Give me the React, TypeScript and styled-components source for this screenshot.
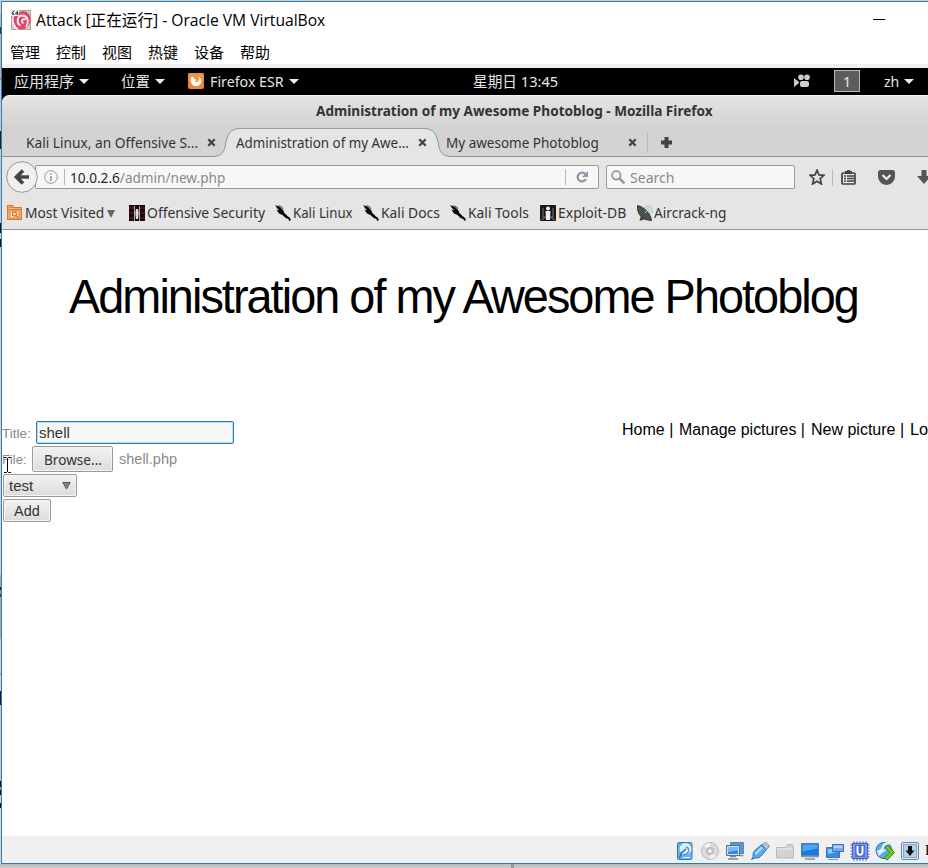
import React, { useLayoutEffect, useRef, useState } from "react";
import styled, { createGlobalStyle, css } from "styled-components";

const ui = `"Noto Sans", "Noto Sans CJK SC", sans-serif`;
const page = `"Liberation Sans", Arial, sans-serif`;

const Global = createGlobalStyle`
  * { box-sizing: border-box; }
  html, body { margin: 0; padding: 0; overflow: hidden; background: #cfcfcf; }
  svg { display: block; flex: none; }
`;

/* Text that is condensed or widened to occupy a given width. */
const FitBox = styled.span<{ $w: number; $gap: number; $up: number }>`
  display: block;
  flex: none;
  width: ${(p) => p.$w}px;
  margin-left: ${(p) => p.$gap}px;
  margin-top: ${(p) => -p.$up}px;
  white-space: nowrap;
`;
const FitInner = styled.span`
  display: inline-block;
  transform-origin: 0 50%;
`;
type FitProps = { w: number; gap?: number; up?: number; children: React.ReactNode };
function Fit({ w, gap = 0, up = 0, children }: FitProps) {
  const ref = useRef<HTMLSpanElement>(null);
  const [scale, setScale] = useState(1);
  useLayoutEffect(() => {
    if (ref.current) setScale(w / ref.current.offsetWidth);
  }, [w]);
  return (
    <FitBox $w={w} $gap={gap} $up={up}>
      <FitInner ref={ref} style={{ transform: `scaleX(${scale})` }}>{children}</FitInner>
    </FitBox>
  );
}

const Desktop = styled.div`
  width: 928px;
  height: 868px;
  display: grid;
  grid-template-columns: 1px 1fr;
  grid-template-rows: 1px 863px 4px;
  overflow: hidden;
  background: #cfcfcf;
`;
const Edge = styled.div`
  grid-row: 2;
  background: linear-gradient(#d0d0d0 0 13px, #b5b5bc 13px 26px, #333 26px 33px, #b5b5bc 33px 77px,
    #888 77px 79px, #cacad0 79px 130px, #222 130px 148px, #cacad0 148px 222px, #111 222px 232px,
    #ccc 232px 238px, #111 238px 246px, #d2d2d6 246px 574px, #aaa 574px 586px, #222 586px 589px,
    #999 589px 593px, #444 593px 596px, #aaa 596px 638px, #d2d2d6 638px 672px, #aaa 672px 674px,
    #d2d2d6 674px 690px, #1c1c28 690px 704px, #c8c8cc 704px 780px, #111 780px 786px,
    #999 786px 789px, #111 789px 794px, #ccc 794px 802px, #111 802px 807px, #d5d5d5 807px);
`;
const Shadow = styled.div`
  grid-column: 1 / 3;
  grid-row: 3;
  background: linear-gradient(90deg, transparent 511px, #999 511px 514px, transparent 514px),
    linear-gradient(#b9b9b9, #cecece);
`;
const Window = styled.div`
  grid-row: 2;
  grid-column: 2;
  border: 1px solid #2b7cb9;
  border-right: 0;
  display: flex;
  flex-direction: column;
  background: #fff;
  overflow: hidden;
`;

const row = css`
  display: flex;
  align-items: center;
  flex: none;
  overflow: hidden;
`;
const TitleBar = styled.div`
  ${row}
  height: 37px;
  padding: 0 0 2px 9px;
  font: 16px/24px "Open Sans", "Noto Sans CJK SC", sans-serif;
  color: #000;
`;
const Minimize = styled.span`
  width: 12px;
  height: 1px;
  margin-left: 548px;
  background: #000;
`;
const MenuBar = styled.div`
  ${row}
  padding: 2px 0 1px 8px;
  border-bottom: 4px solid #f0f0f0;
  font: 15px/22px "Noto Sans CJK SC", sans-serif;
  box-sizing: content-box;
  height: 22px;
  color: #000;
`;
const GnomeBar = styled.div`
  ${row}
  height: 27px;
  padding: 0 0 2px 12px;
  background: #000;
  color: #e6e6e6;
  font: 15px/22px ${ui};
`;
const Caret = styled.span`
  margin-left: 5px;
  margin-top: 1px;
  border: 5px solid transparent;
  border-top-color: #eee;
  border-bottom: 0;
  flex: none;
`;
const Workspace = styled.span`
  width: 26px;
  height: 22px;
  margin-left: 24px;
  border: 1px solid #bbb;
  background: #5c5c5c;
  text-align: center;
  font-size: 15px;
  line-height: 20px;
  flex: none;
`;
const Chrome = styled.div`
  flex: none;
  background: #000;
`;
const BrowserHead = styled.div`
  height: 62px;
  border-radius: 7px 0 0 0;
  border-top: 1px solid #f4f4f4;
  background: linear-gradient(#e4e4e4, #d2d2d2 32px, #d4d4d4);
  color: #333;
`;
const BrowserTitle = styled.div`
  ${row}
  height: 32px;
  padding-bottom: 2px;
  font: bold 14px/22px ${ui};
`;
const TabStrip = styled.div`
  ${row}
  height: 29px;
  padding-bottom: 1px;
  font: 15px/22px ${ui};
  background: linear-gradient(#8f9397, #8f9397) 0 28px / 100% 1px no-repeat;
`;
const ActiveTab = styled.div`
  display: flex;
  align-items: center;
  position: relative;
  height: 28px;
  width: 210px;
  margin-left: 20px;
`;
const TabBack = styled.div`
  position: absolute;
  inset: 0 auto auto -24px;
  display: grid;
  grid-template-columns: 28px 184px 28px;
  height: 29px;
  & ~ * { position: relative; }
`;
const TabMiddle = styled.div`
  background: #e5e5e5;
  border-top: 1px solid #969ca2;
`;
const Rule = styled.span<{ $gap: number; $h: number }>`
  width: 1px;
  height: ${(p) => p.$h}px;
  margin-left: ${(p) => p.$gap}px;
  background: #b8b8b8;
  flex: none;
`;
const NavBar = styled.div`
  ${row}
  height: 40px;
  padding-left: 4px;
  background: #e5e5e5;
  color: #8a8a8a;
  font: 15px/22px ${ui};
`;
const Back = styled.span`
  z-index: 1;
  flex: none;
`;
const Field = styled.div<{ $w: number; $gap: number; $pad: number }>`
  display: flex;
  align-items: center;
  flex: none;
  height: 24px;
  width: ${(p) => p.$w}px;
  margin-left: ${(p) => p.$gap}px;
  padding-left: ${(p) => p.$pad}px;
  border: 1px solid #999;
  border-radius: 2px;
  background: #f7f7f7;
`;
const Host = styled.b`
  font-weight: 400;
  color: #262626;
`;
const Bookmarks = styled.div`
  ${row}
  height: 33px;
  padding: 0 0 1px 5px;
  background: #e5e5e5;
  border-bottom: 1px solid #999;
  font: 15px/22px ${ui};
  color: #333;
`;
const Folded = styled.span`
  margin-left: 3px;
  margin-top: 2px;
  border: 4px solid transparent;
  border-top: 8px solid #666;
  border-bottom: 0;
  flex: none;
`;
const Page = styled.main`
  position: relative;
  flex: 1;
  background: #fff;
  font-family: ${page};
`;
const Heading = styled.h1`
  margin: 0;
  padding: 37px 0 0 67px;
  height: 190px;
  font: 48px/60px ${page};
  letter-spacing: -2px;
  color: #000;
`;
const Columns = styled.div`
  display: flex;
`;
const Form = styled.form`
  width: 620px;
  flex: none;
  display: flex;
  flex-direction: column;
  color: #888;
  font: 13px/20px ${page};
`;
const FormRow = styled.div<{ $h: number; $indent?: number }>`
  display: flex;
  align-items: center;
  height: ${(p) => p.$h}px;
  padding-left: ${(p) => p.$indent ?? 0}px;
  flex: none;
`;
const TextInput = styled.div`
  width: 198px;
  height: 23px;
  margin-left: 5px;
  padding-left: 2px;
  border: 1px solid #2a7fb0;
  border-radius: 2px;
  box-shadow: inset 0 0 0 1px #b5def5;
  background: #f7f7f7;
  color: #333;
  font: 15px/22px ${page};
`;
const Button = styled.div<{ $w: number; $h: number; $gap?: number; $ui?: boolean }>`
  display: flex;
  align-items: center;
  justify-content: center;
  flex: none;
  width: ${(p) => p.$w}px;
  height: ${(p) => p.$h}px;
  margin-left: ${(p) => p.$gap ?? 0}px;
  border: 1px solid #999;
  border-radius: 2px;
  background: linear-gradient(#f2f2f2, #dcdcdc);
  box-shadow: inset 0 0 0 1px #f4f4f4;
  color: #333;
  font: 15px/20px ${(p) => (p.$ui ? ui : page)};
`;
const Chosen = styled.span`
  font: 15px/20px ${page};
`;
const Links = styled.nav`
  display: flex;
  padding-top: 1px;
  font: 16px/18px ${page};
  color: #000;
`;
const Pointer = styled.span`
  position: absolute;
  left: 1px;
  top: 226px;
`;
const Status = styled.div`
  ${row}
  height: 27px;
  padding: 3px 0 0 673px;
  gap: 5px;
  background: #f0f0f0;
  font: 14px/20px "Liberation Serif", serif;
  color: #000;
  white-space: nowrap;
`;

const SpacedSvg = styled.svg<{ $gap?: number }>`
  margin-left: ${(p) => p.$gap ?? 0}px;
`;
const Icon = SpacedSvg;
const X = ({ gap }: { gap: number }) => (
  <SpacedSvg $gap={gap} width="9" height="9" viewBox="0 0 9 9">
    <path d="M1.3 1.3 7.7 7.7M7.7 1.3 1.3 7.7" stroke="#444" strokeWidth="2.3" />
  </SpacedSvg>
);

const Debian = () => (
  <svg width="20" height="20" viewBox="0 0 20 20">
    <rect x=".5" y=".5" width="19" height="19" fill="#d9d4cb" stroke="#aaa397" />
    <path d="M10 1.500C16 .5 19.500 4 19.500 9.500 19.500 15 16 19.500 9 19.500 4.500 18.500 1.500 14 2.500 9 3 6 6 3 10 1.500Z" fill="#e0436b" />
    <path d="M1.500 9Q2 16 7 19.500M15 17C18.500 11 16.500 5.500 11 5.500 5.500 6 5.500 14 9.500 15.500M15 9.500Q13 8.500 11.500 9.800 10 12 12.500 13.500" fill="none" stroke="#fbe6ea" strokeWidth="1.900" />
    <path d="M0 0h8v6H0z" fill="#e8e8e8" />
    <path d="M3.2 1.2Q1.2 1.2 1.2 3.6 1.5 5 2.7 4.6 3.7 3.4 1.6 3.1M6.5 5V1.3L4.5 3.8h2.8" fill="none" stroke="#333" strokeWidth=".9" />
  </svg>
);
const Fox = () => (
  <Icon $gap={23} width="16" height="16" viewBox="0 0 16 16">
    <rect width="16" height="16" rx="2" fill="#ef8535" />
    <path d="M0 0h16v8H0z" fill="#fbaa60" opacity=".4" />
    <path d="M3.200 4C1.800 8.500 3.500 13.200 8 13.200c4.300 0 6.300-3.700 4.800-7.200-.5-1.300-1.500-2.200-2.800-2.600C11.200 4.800 11.500 6 10.800 7.500 9.800 9.300 7.200 9.300 6.400 8c1.400.2 2-.6 1.500-1.600C6.200 6.300 5 5.400 5 3.600Z" fill="#fff" />
  </Icon>
);
const Kali = ({ gap }: { gap: number }) => (
  <Icon $gap={gap} width="16" height="16" viewBox="0 0 16 16">
    <path d="M0 0 5 2 8.500 5.500 9 7.500 12.500 11 15 13 16 15 14 16 13.500 14 10.500 13 7.500 10 4 8.500 1.500 4.800 4 5.500Z" fill="#050505" />
    <path d="M3 .8 7 2 8 4M1.500 2.500 5 4" fill="none" stroke="#111" strokeWidth=".7" />
  </Icon>
);

const StatusIcons = () => (
  <>
    <svg width="20" height="20" viewBox="0 0 20 20">
      <rect x="2.500" y="1.500" width="14.500" height="17" rx="1.500" fill="#69b4ef" stroke="#2f79b9" />
      <circle cx="10.500" cy="8" r="5.300" fill="#d9effd" stroke="#fff" />
      <path d="m4.500 17 2-5 4.500-4" fill="none" stroke="#2676b8" strokeWidth="1.600" />
      <path d="M8 13.500c6 1 7.500-6 3-7.500" fill="none" stroke="#4f98d2" strokeWidth="1.400" /><path d="M8 16.500h7" stroke="#e8f7ff" />
    </svg>
    <svg width="20" height="20" viewBox="0 0 20 20">
      <circle cx="10" cy="10" r="8.500" fill="#dcdcdc" stroke="#b9b9b9" />
      <path d="M10 10 4 4.500Q7 1.700 10 2ZM10 10l6 5.500Q13 18 10 18Z" fill="#f2f2f2" />
      <circle cx="10" cy="10" r="3.500" fill="#cfcfcf" stroke="#aaa" /><circle cx="10" cy="10" r="1.500" fill="#fff" />
    </svg>
    <svg width="20" height="20" viewBox="0 0 20 20">
      <path d="M5.500 1.500h13v11h-13z" fill="#4a9bf0" stroke="#6c8296" />
      <path d="M14 14.500h4.500" stroke="#8b949c" strokeWidth="1.500" />
      <path d="M1.500 4.500h13v10h-13z" fill="#2989ee" stroke="#5d7184" />
      <path d="M2.500 5.500h11v8h-11z" fill="none" stroke="#cfe2f3" /><path d="M3 6h10v3.500L3 11z" fill="#77baf8" />
      <path d="M5 15.500h6M3 18h10" stroke="#7d878e" strokeWidth="1.500" />
    </svg>
    <svg width="20" height="20" viewBox="0 0 20 20">
      <path d="m12 4.500 3.500-3.500 4 4-3.500 4Z" fill="#d4d8dc" stroke="#7a8085" /><path d="m15 3.500 1 1M17 5.500l.8.8" stroke="#444" />
      <path d="M1.500 18.500 3.200 15.500C2.500 12 4 10 7 7.500l5-4 4.500 5-4 5Q9 18 4.800 17Z" fill="#5baae9" stroke="#2873b4" />
      <path d="M5.500 13 12 6.500" stroke="#b9e0fb" strokeWidth="2.200" />
    </svg>
    <svg width="20" height="20" viewBox="0 0 20 20">
      <path d="M1.500 6.500h9l2-3h5l1 2v11.500h-17Z" fill="#d2d2d2" stroke="#b8b8b8" /><path d="M2 8h16" stroke="#eee" />
    </svg>
    <svg width="20" height="20" viewBox="0 0 20 20">
      <path d="M1.500 2.500h17v12h-17z" fill="#167ae2" stroke="#517faa" /><path d="M2.500 3.500h15v4l-15 3z" fill="#4ba4f5" />
      <path d="M1 15.500h18M5 18h10" stroke="#87939d" strokeWidth="1.300" />
    </svg>
    <svg width="20" height="20" viewBox="0 0 20 20">
      <path d="M1.500 6.500h13v10h-13z" fill="#338ded" stroke="#4276aa" /><path d="M3 8h9v3l-9 2z" fill="#8ec8ff" />
      <path d="M7.500 3.500h11v7h-11z" fill="#76a9ee" stroke="#3570bd" /><path d="M8.500 4.500h9v2.500h-9z" fill="#b1d2fa" /><path d="M3 18.500h10" stroke="#8a959f" />
    </svg>
    <svg width="20" height="20" viewBox="0 0 20 20">
      <path d="M4 .5v19M7 .5v19M10 .5v19M13 .5v19M16 .5v19M.5 4h19M.5 7h19M.5 10h19M.5 13h19M.5 16h19" stroke="#3f58c0" strokeWidth="1.200" />
      <rect x="2.500" y="2.500" width="15" height="15" fill="#7d9aec" stroke="#4663bd" />
      <rect x="5" y="4" width="10" height="12" fill="#4a70d8" />
      <path d="M7.500 5v6q0 2.800 2.500 2.800t2.500-2.800V5" fill="none" stroke="#fff" strokeWidth="1.900" />
    </svg>
    <svg width="20" height="20" viewBox="0 0 20 20">
      <circle cx="9" cy="9.500" r="8" fill="#5ea9e2" stroke="#326b9a" />
      <path d="M2 11Q7 10 8 6t6-3.500M3.500 14q3-4 7-5" fill="none" stroke="#dff4ff" strokeWidth="2.300" />
      <path d="m10 6.500 4.500 5-5 5 2.700 2.700 7.300-7.700-6.700-7.300Z" fill="#66c527" stroke="#35851a" />
    </svg>
    <svg width="20" height="20" viewBox="0 0 20 20">
      <rect x="1.500" y="1.500" width="17" height="17" rx="1.500" fill="#dce9f5" stroke="#5b8bb7" />
      <rect x="3.500" y="3.500" width="13" height="13" fill="#b8cddf" stroke="#86a8c5" />
      <path d="M8 5h4v4.500h2.500L10 15 5.500 9.500H8z" fill="#111" />
    </svg>
  </>
);

export default function App() {
  return (
    <Desktop>
      <Global />
      <Edge />
      <Window>
        <TitleBar>
          <Debian />
          <Fit w={289} gap={5}>Attack [正在运行] - Oracle VM VirtualBox</Fit>
          <Minimize />
        </TitleBar>
        <MenuBar>
          {["管理", "控制", "视图", "热键", "设备", "帮助"].map((t, i) => (
            <Fit key={t} w={30} gap={i ? 16 : 0}>{t}</Fit>
          ))}
        </MenuBar>
        <GnomeBar>
          <Fit w={60}>应用程序</Fit><Caret />
          <Fit w={29} gap={32}>位置</Fit><Caret />
          <Fox />
          <Fit w={74} gap={6}>Firefox ESR</Fit><Caret />
          <Fit w={85} gap={174}>星期日 13:45</Fit>
          <Icon $gap={236} width="16" height="14" viewBox="0 0 16 14" fill="#ccc">
            <circle cx="7" cy="3.200" r="2.800" /><circle cx="13" cy="3.200" r="2.800" />
            <rect x="6" y="7" width="9" height="6" rx="2" /><path d="M0 4 5 8v1l-5 4Z" />
          </Icon>
          <Workspace>1</Workspace>
          <Fit w={15} gap={24}>zh</Fit><Caret />
        </GnomeBar>
        <Chrome>
          <BrowserHead>
            <BrowserTitle><Fit w={397} gap={314}>Administration of my Awesome Photoblog - Mozilla Firefox</Fit></BrowserTitle>
            <TabStrip>
              <Fit w={172} gap={24}>Kali Linux, an Offensive S...</Fit>
              <X gap={9} />
              <ActiveTab>
                <TabBack>
                  <svg width="28" height="29" viewBox="0 0 28 29">
                    <path d="M0 28.500C9 28.500 12 25 13.500 17 15 7 18 .5 28 .5V29H0Z" fill="#e5e5e5" />
                    <path d="M0 28.500C9 28.500 12 25 13.500 17 15 7 18 .5 28 .5" fill="none" stroke="#8f979f" />
                  </svg>
                  <TabMiddle />
                  <svg width="28" height="29" viewBox="0 0 28 29">
                    <path d="M28 28.500C19 28.500 16 25 14.500 17 13 7 10 .5 0 .5V29H28Z" fill="#e5e5e5" />
                    <path d="M28 28.500C19 28.500 16 25 14.500 17 13 7 10 .5 0 .5" fill="none" stroke="#8f979f" />
                  </svg>
                </TabBack>
                <Fit w={173}>Administration of my Awe...</Fit>
                <X gap={9} />
              </ActiveTab>
              <Fit w={153}>My awesome Photoblog</Fit>
              <X gap={29} />
              <Rule $gap={10} $h={21} />
              <Icon $gap={13} width="11" height="11" viewBox="0 0 11 11"><path d="M3.500 0h4v3.500H11v4H7.500V11h-4V7.500H0v-4h3.500Z" fill="#444" /></Icon>
            </TabStrip>
          </BrowserHead>
          <NavBar>
            <Back>
              <svg width="32" height="32" viewBox="0 0 32 32">
                <circle cx="16" cy="16" r="15.300" fill="#f0f0f0" stroke="#999" />
                <path d="M17 9.500 10.500 16l6.500 6.500M11 16h12" fill="none" stroke="#444" strokeWidth="3.700" />
              </svg>
            </Back>
            <Field $w={564} $gap={-3} $pad={8}>
              <svg width="14" height="14" viewBox="0 0 14 14" fill="none" stroke="#999">
                <circle cx="7" cy="7" r="6.300" /><path d="M7 6v5M7 3v1.700" strokeWidth="1.600" />
              </svg>
              <Rule $gap={6} $h={16} />
              <Fit w={155} gap={5} up={1}><Host>10.0.2.6</Host>/admin/new.php</Fit>
              <Rule $gap={340} $h={16} />
              <Icon $gap={10} width="12" height="12" viewBox="0 0 12 12">
                <path d="M9.300 3A4.400 4.400 0 1 0 10 8" fill="none" stroke="#8a98a5" strokeWidth="2.200" /><path d="M12 0v6H6Z" fill="#8a98a5" />
              </Icon>
            </Field>
            <Field $w={189} $gap={7} $pad={4}>
              <svg width="14" height="14" viewBox="0 0 14 14" fill="none" stroke="#999">
                <circle cx="5.300" cy="5.300" r="4.200" strokeWidth="1.800" /><path d="m8.500 8.500 5 5" strokeWidth="2.500" />
              </svg>
              <Fit w={44} gap={5} up={1}>Search</Fit>
            </Field>
            <Icon $gap={14} width="16" height="16" viewBox="0 0 16 16">
              <path d="m8 1.200 2 4.700 5 .4-3.800 3.300L12.400 15 8 12.200 3.600 15l1.200-5.400L1 6.300l5-.4Z" fill="none" stroke="#444" strokeWidth="1.700" />
            </Icon>
            <Rule $gap={7} $h={17} />
            <Icon $gap={8} width="15" height="16" viewBox="0 0 15 16" fill="none" stroke="#444">
              <rect x="1" y="4" width="13" height="11" rx="1" strokeWidth="1.700" /><path d="M4 3.500h7M7.500 1v2" strokeWidth="2.800" />
              <path d="M3 7h2M6 7h7M3 9.500h2M6 9.500h7M3 12h2M6 12h7" strokeWidth="1.300" />
            </Icon>
            <Icon $gap={22} width="17" height="15" viewBox="0 0 17 15">
              <path d="M1.500 0h14l1.500 1.500V7Q16 14 8.500 15 1 14 0 7V1.500Z" fill="#555" /><path d="m4.500 5 4 4 4-4" fill="none" stroke="#eee" strokeWidth="2.200" />
            </Icon>
            <Icon $gap={22} width="14" height="14" viewBox="0 0 14 14"><path d="M4.500 0h5v6H14l-7 8-7-8h4.500Z" fill="#555" /></Icon>
          </NavBar>
          <Bookmarks>
            <svg width="15" height="15" viewBox="0 0 15 15" fill="none" stroke="#d87a28">
              <path d="M.7.7h5l1 2h7.600v11.600H.7Z" fill="#f7c58f" strokeWidth="1.300" /><path d="M1 4.500h13M2.500 2.500h3" />
              <rect x="3" y="6" width="9" height="7" fill="#fff1dd" /><circle cx="7.500" cy="9" r="2" strokeWidth="1.400" /><path d="m9 10.500 2 2" strokeWidth="1.500" />
            </svg>
            <Fit w={79} gap={3} up={1}>Most Visited</Fit><Folded />
            <Icon $gap={14} width="16" height="16" viewBox="0 0 16 16">
              <path d="M0 0h16v16H0z" fill="#1c0809" /><path d="M0 3h5M0 8h5M0 13h5M11 3h5M11 8h5M11 13h5" stroke="#3c1719" strokeWidth="2" />
              <path d="M5.500 1v15M10.500 1v15" stroke="#aaa" /><path d="M7 4h2l.7 4-.7 6H7l-.7-6Z" fill="#ddd" />
            </Icon>
            <Fit w={118} gap={2} up={1}>Offensive Security</Fit>
            <Kali gap={10} /><Fit w={60} gap={2} up={1}>Kali Linux</Fit>
            <Kali gap={10} /><Fit w={59} gap={2} up={1}>Kali Docs</Fit>
            <Kali gap={10} /><Fit w={61} gap={2} up={1}>Kali Tools</Fit>
            <Icon $gap={11} width="16" height="16" viewBox="0 0 16 16">
              <rect width="16" height="16" rx="1" fill="#171717" /><path d="M3 3v9h3M13 3v9h-3M1 14h3v-2M15 14h-3v-2" fill="none" stroke="#777" />
              <circle cx="8" cy="3.500" r="2" fill="#eee" /><path d="M5.500 6h5l-.5 9H6z" fill="#eee" />
            </Icon>
            <Fit w={68} gap={2} up={1}>Exploit-DB</Fit>
            <Icon $gap={11} width="16" height="16" viewBox="0 0 16 16">
              <path d="m4 10-1.500 6 6-2Z" fill="#454545" />
              <path d="M.5.5C7 2 13.500 8 14.500 15.500Q8 15.500 4 11.500T.5.5Z" fill="#4b514b" stroke="#333733" />
              <path d="m8 8 3-3" stroke="#ddd" />
              <path d="M7 2.500q5.500 0 6.500 7M9 .8Q15.500 1 15.500 8" fill="none" stroke="#a9c4ea" strokeWidth="1.200" />
            </Icon>
            <Fit w={72} gap={1} up={1}>Aircrack-ng</Fit>
          </Bookmarks>
        </Chrome>
        <Page>
          <Heading><Fit w={789}>Administration of my Awesome Photoblog</Fit></Heading>
          <Columns>
            <Form>
              <FormRow $h={25}><Fit w={29} up={-2}>Title:</Fit><TextInput>shell</TextInput></FormRow>
              <FormRow $h={28}>
                <Fit w={25} up={-2}>File:</Fit>
                <Button $w={81} $h={26} $gap={5} $ui><Fit w={58}>Browse...</Fit></Button>
                <Chosen><Fit w={58} gap={6}>shell.php</Fit></Chosen>
              </FormRow>
              <FormRow $h={25} $indent={1}>
                <Button $w={74} $h={23}>
                  <Fit w={24}>test</Fit>
                  <Icon $gap={29} width="9" height="8" viewBox="0 0 9 8"><path d="M.8.5h7.400L4.500 7Z" fill="#888" stroke="#555" /></Icon>
                </Button>
              </FormRow>
              <FormRow $h={25} $indent={1}><Button $w={48} $h={23}><Fit w={26}>Add</Fit></Button></FormRow>
            </Form>
            <Links>
              <Fit w={51}>Home |</Fit>
              <Fit w={126} gap={6}>Manage pictures |</Fit>
              <Fit w={93} gap={6}>New picture |</Fit>
              <Fit w={50} gap={6}>Logout</Fit>
            </Links>
          </Columns>
          <Pointer>
            <svg width="9" height="18" viewBox="0 0 9 18" fill="none">
              <path d="M1 1.500h2.500l1 1 1-1H8M4.500 2v14M1 16.500h2.500l1-1 1 1H8" stroke="#fff" strokeWidth="3" />
              <path d="M1 1.500h2.500l1 1 1-1H8M4.500 2v14M1 16.500h2.500l1-1 1 1H8" stroke="#000" />
            </svg>
          </Pointer>
        </Page>
        <Status><StatusIcons /><span>Right Ctrl</span></Status>
      </Window>
      <Shadow />
    </Desktop>
  );
}
